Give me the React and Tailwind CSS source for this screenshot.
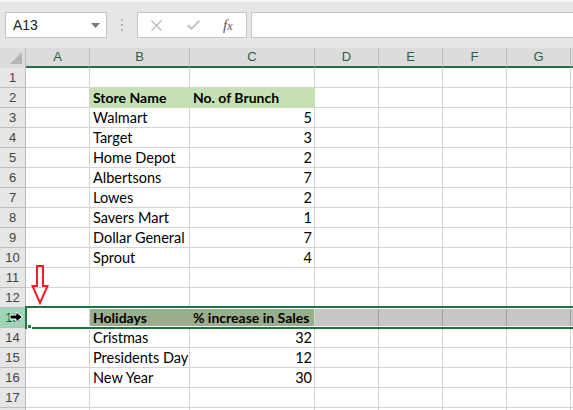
import React from "react";

const cols = [
  { key: "A", w: "w-[64px]" },
  { key: "B", w: "w-[100px]" },
  { key: "C", w: "w-[125px]" },
  { key: "D", w: "w-[64px]" },
  { key: "E", w: "w-[64px]" },
  { key: "F", w: "w-[64px]" },
  { key: "G", w: "w-[64px]" },
];

const data = {
  2: { B: "Store Name", C: "No. of Brunch", header: true },
  3: { B: "Walmart", C: "5" },
  4: { B: "Target", C: "3" },
  5: { B: "Home Depot", C: "2" },
  6: { B: "Albertsons", C: "7" },
  7: { B: "Lowes", C: "2" },
  8: { B: "Savers Mart", C: "1" },
  9: { B: "Dollar General", C: "7" },
  10: { B: "Sprout", C: "4" },
  13: { B: "Holidays", C: "% increase in Sales", header: true },
  14: { B: "Cristmas", C: "32" },
  15: { B: "Presidents Day", C: "12" },
  16: { B: "New Year", C: "30" },
};

function Row({ n, label = true }) {
  const d = data[n] || {};
  const sel = n === 13;
  return (
    <div className="flex h-[20px] shrink-0">
      <div
        className={`w-[26px] shrink-0 border-r border-b border-[#bdbdbd] flex items-center justify-center text-[13px] font-['Liberation_Sans',sans-serif] ${
          sel ? "bg-[#9fd5b7] text-[#1d5a38]" : "bg-[#e6e6e6] text-[#444]"
        }`}
      >
        {label ? n : ""}
      </div>
      {cols.map((c) => {
        const txt = d[c.key];
        const isNum = c.key === "C" && txt && !d.header;
        const green = d.header && (c.key === "B" || c.key === "C");
        if (sel) {
          let band = "bg-white";
          let line = "border-[#d4d4d4]";
          if (c.key === "B" || c.key === "C") {
            band = "bg-[#9bae8b]";
            line = c.key === "B" ? "border-[#9bae8b]" : "border-[#d4d4d4]";
          } else if (c.key !== "A") {
            band = "bg-[#c6c6c6]";
            line = "border-[#9e9e9e]";
          }
          return (
            <div key={c.key} className={`${c.w} shrink-0 border-b border-[#d4d4d4] flex flex-col`}>
              <div className="h-[1px] bg-white" />
              <div className={`flex-1 ${band} border-r ${line} flex items-center px-[3px] pt-[1px] text-[14px] font-bold text-black leading-none whitespace-nowrap`}>
                {txt}
              </div>
              <div className="h-[1px] bg-white" />
            </div>
          );
        }
        return (
          <div
            key={c.key}
            className={`${c.w} shrink-0 border-b border-r flex items-center pt-[1px] text-black leading-none whitespace-nowrap ${
              green
                ? "bg-[#c6e0b4] border-[#c6e0b4] font-bold text-[14px] pl-[3px]"
                : "bg-white border-[#d4d4d4] text-[14.5px] " + (isNum ? "justify-end pr-[2px]" : "pl-[3px]")
            }`}
          >
            {txt}
          </div>
        );
      })}
      <div className={`flex-1 border-b border-[#d4d4d4] ${sel ? "bg-white py-[1px]" : "bg-white"}`}>
        {sel && <div className="h-full bg-[#c6c6c6]" />}
      </div>
    </div>
  );
}

export default function App() {
  const rows = Array.from({ length: 17 }, (_, i) => i + 1);
  return (
    <div className="w-[573px] h-[410px] overflow-hidden bg-white relative font-['Lato',sans-serif]">
      {/* toolbar */}
      <div className="h-[48px] bg-[#e6e6e6] border-t-2 border-[#f3f3f3] flex items-start pt-[10px] pl-[5px] font-['Liberation_Sans',sans-serif]">
        <div className="w-[102px] h-[26px] bg-white border border-[#c6c6c6] flex items-center pl-[7px] pr-[6px] text-[14px] text-[#222]">
          <span className="flex-1">A13</span>
          <svg width="9" height="5" viewBox="0 0 9 5">
            <path d="M0 0 L9 0 L4.5 5 Z" fill="#767676" />
          </svg>
        </div>
        <div className="w-[30px] h-[26px] flex flex-col items-center justify-center gap-[3px]">
          <div className="w-[2px] h-[2px] bg-[#b5b5b5]" />
          <div className="w-[2px] h-[2px] bg-[#b5b5b5]" />
          <div className="w-[2px] h-[2px] bg-[#b5b5b5]" />
        </div>
        <div className="w-[110px] h-[26px] bg-white border border-[#c6c6c6] flex items-center">
          <svg className="ml-[13px]" width="11" height="11" viewBox="0 0 11 11">
            <path d="M0.5 0.5 L10.5 10.5 M10.5 0.5 L0.5 10.5" stroke="#bdbdbd" strokeWidth="1.4" />
          </svg>
          <svg className="ml-[25px]" width="13" height="10" viewBox="0 0 13 10">
            <path d="M0.7 5 L4.5 8.8 L12.3 0.7" stroke="#bdbdbd" strokeWidth="1.8" fill="none" />
          </svg>
          <span className="ml-[23px] font-['Liberation_Serif',serif] italic text-[15px] text-[#5a5a5a] leading-none">
            f<span className="text-[12px]">x</span>
          </span>
        </div>
        <div className="flex-1 ml-[4px] h-[26px] bg-white border border-[#c6c6c6] border-r-0" />
      </div>

      {/* column header */}
      <div className="flex h-[20px] font-['Liberation_Sans',sans-serif]">
        <div className="w-[26px] shrink-0 bg-[#dcdcdc] border-r border-[#bdbdbd] relative">
          <svg className="absolute left-[10px] top-[4px]" width="12" height="12" viewBox="0 0 12 12">
            <path d="M12 0 L12 12 L0 12 Z" fill="#b4b4b4" />
          </svg>
        </div>
        {cols.map((c) => (
          <div
            key={c.key}
            className={`${c.w} shrink-0 bg-[#dcdcdc] border-r border-[#bdbdbd] border-b-2 border-b-[#217346] flex items-center justify-center text-[13px] text-[#2e5d47]`}
          >
            {c.key}
          </div>
        ))}
        <div className="flex-1 bg-[#dcdcdc] border-b-2 border-b-[#217346]" />
      </div>

      {/* rows */}
      <div className="flex flex-col">
        {rows.map((n) => (
          <Row key={n} n={n} />
        ))}
        <Row n={18} label={false} />
      </div>

      {/* selection outline for row 13 */}
      <div className="absolute left-[25px] right-0 top-[306px] h-[23px] border-2 border-r-0 border-[#217346]" />
      <div className="absolute left-[27px] top-[324px] w-[5px] h-[5px] bg-[#217346] border border-white" />

      {/* cursor arrow on row header */}
      <svg className="absolute left-[9px] top-[311px]" width="15" height="12" viewBox="0 0 15 12">
        <path d="M1 4 L7 4 L7 1 L13.5 6 L7 11 L7 8 L1 8 Z" fill="#000" stroke="#fff" strokeWidth="1" />
      </svg>

      {/* red arrow */}
      <svg className="absolute left-[31px] top-[264px]" width="19" height="42" viewBox="0 0 19 42">
        <path d="M6 2 L12 2 L12 22 L16.5 22 L9 39 L1.5 22 L6 22 Z" fill="none" stroke="#ee1c24" strokeWidth="2" strokeLinejoin="miter" />
      </svg>
    </div>
  );
}
